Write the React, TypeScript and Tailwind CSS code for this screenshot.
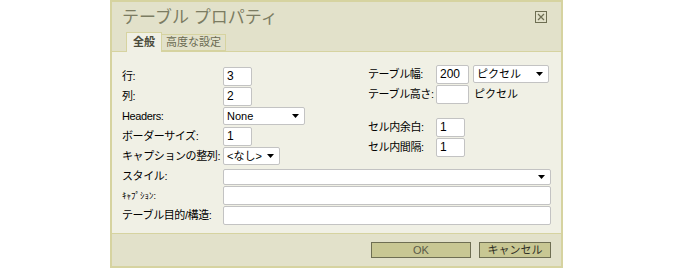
import React from 'react';

const font = { fontFamily: '"Liberation Sans", "Noto Sans CJK JP", sans-serif' };

function Arrow() {
  return (
    <svg width="7" height="4" viewBox="0 0 7 4" className="shrink-0">
      <path d="M0 0h7L3.5 4z" fill="#000" />
    </svg>
  );
}

function Input({ value = '', w }: { value?: string; w: string }) {
  return (
    <div className={`${w} h-[19px] bg-white border border-[#c3c3c3] rounded-[2px] flex items-center pl-[3px] text-[12px] text-black`}>
      {value}
    </div>
  );
}

function Select({ value = '', w, h = 'h-[18px]' }: { value?: string; w: string; h?: string }) {
  return (
    <div className={`${w} ${h} bg-white border border-[#c3c3c3] rounded-[2px] flex items-center justify-between pl-[3px] pr-[5px] text-[11px] text-black whitespace-nowrap`}>
      <span>{value}</span>
      <Arrow />
    </div>
  );
}

function Row({ label, children, lw }: { label: React.ReactNode; children: React.ReactNode; lw: string }) {
  return (
    <div className="flex items-center h-[20px]">
      <div className={`${lw} shrink-0 text-[11px] text-black whitespace-nowrap tracking-[-0.4px]`}>{label}</div>
      {children}
    </div>
  );
}

export default function App() {
  return (
    <div className="w-[675px] h-[269px] bg-white" style={font}>
      <div className="ml-[110px] w-[453px] h-[268px] border-2 border-[#d6d3a0] flex flex-col">
        {/* header */}
        <div className="h-[50px] bg-[#e2e1ca] border-b border-[#d6d3a0] flex flex-col">
          <div className="flex items-start justify-between pl-[10px] pr-[14px] pt-[5px]">
            <span className="text-[17px] leading-[22px] text-[#7c7c62]">テーブル プロパティ</span>
            <div className="mt-[4px] w-[12px] h-[12px] border border-[#6e6e52] flex items-center justify-center">
              <svg width="8" height="8" viewBox="0 0 8 8">
                <path d="M1 1l6 6M7 1L1 7" stroke="#6e6e52" strokeWidth="1.2" />
              </svg>
            </div>
          </div>
          <div className="mt-auto flex items-end pl-[14px] -mb-px">
            <div className="w-[36px] h-[20px] bg-[#f0f0e5] border border-b-0 border-[#d6d3a0] flex items-center justify-center text-[11px] font-bold text-[#4a4a3a]">
              全般
            </div>
            <div className="w-[64px] h-[17px] bg-[#e2e1ca] border border-[#d6d3a0] border-l-0 flex items-center justify-center text-[11px] text-[#6a6a52] mb-px">
              高度な設定
            </div>
          </div>
        </div>

        {/* body */}
        <div className="flex-1 bg-[#f0f0e5] pl-[10px] pt-[14px]">
          <div className="flex">
            <div className="w-[246px] flex flex-col">
              <Row label="行:" lw="w-[101px]"><Input value="3" w="w-[29px]" /></Row>
              <Row label="列:" lw="w-[101px]"><Input value="2" w="w-[29px]" /></Row>
              <Row label="Headers:" lw="w-[101px]"><Select value="None" w="w-[82px]" /></Row>
              <Row label="ボーダーサイズ:" lw="w-[101px]"><Input value="1" w="w-[29px]" /></Row>
              <Row label="キャプションの整列:" lw="w-[101px]"><Select value="<なし>" w="w-[57px]" /></Row>
            </div>
            <div className="flex flex-col -mt-[2px]">
              <Row label="テーブル幅:" lw="w-[68px]">
                <Input value="200" w="w-[33px]" />
                <div className="ml-[4px]"><Select value="ピクセル" w="w-[76px]" /></div>
              </Row>
              <Row label="テーブル高さ:" lw="w-[68px]">
                <Input w="w-[33px]" />
                <span className="ml-[5px] text-[11px]">ピクセル</span>
              </Row>
              <div className="h-[13px]" />
              <Row label="セル内余白:" lw="w-[68px]"><Input value="1" w="w-[29px]" /></Row>
              <Row label="セル内間隔:" lw="w-[68px]"><Input value="1" w="w-[29px]" /></Row>
            </div>
          </div>
          <div className="mt-[2px] flex flex-col">
            <div className="flex items-center h-[17px]">
              <div className="w-[101px] shrink-0 text-[11px] tracking-[-0.4px]">スタイル:</div>
              <Select w="w-[328px]" h="h-[16px]" />
            </div>
            <Row label={<span className="text-[9px] tracking-normal">ｷｬﾌﾟｼｮﾝ:</span>} lw="w-[101px]"><Input w="w-[328px]" /></Row>
            <Row label="テーブル目的/構造:" lw="w-[101px]"><Input w="w-[328px]" /></Row>
          </div>
        </div>

        {/* footer */}
        <div className="h-[33px] bg-[#e2e1ca] border-t border-[#d6d3a0] flex items-start justify-end pt-[8px] pr-[10px] gap-[8px]">
          <button className="w-[100px] h-[16px] bg-[#c8c793] border border-[#6e6e52] text-[11px] leading-none text-[#5a5a48]">OK</button>
          <button className="w-[72px] h-[16px] bg-[#c8c793] border border-[#6e6e52] text-[11px] leading-none text-[#2e2e24]">キャンセル</button>
        </div>
      </div>
    </div>
  );
}
